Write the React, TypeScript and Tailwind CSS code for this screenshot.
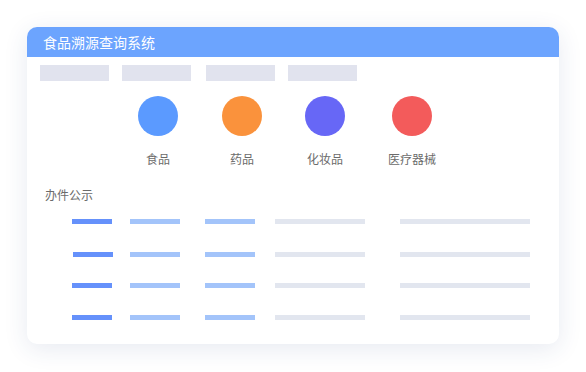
import React from "react";

const cats = [
  { name: "食品", color: "bg-[#5b9aff]", ml: "ml-[101px]" },
  { name: "药品", color: "bg-[#fa923c]", ml: "ml-[24px]" },
  { name: "化妆品", color: "bg-[#6767f6]", ml: "ml-[23px]" },
  { name: "医疗器械", color: "bg-[#f35b5b]", ml: "ml-[27px]" },
];

const rows = [
  { mt: "mt-[16px]", first: "ml-[45px]", second: "ml-[18px]" },
  { mt: "mt-[28px]", first: "ml-[46px]", second: "ml-[17px]" },
  { mt: "mt-[26px]", first: "ml-[45px]", second: "ml-[18px]" },
  { mt: "mt-[27px]", first: "ml-[45px]", second: "ml-[18px]" },
];

export default function App() {
  return (
    <div
      className="w-[586px] h-[372px] bg-white pt-[27px] pl-[27px]"
      style={{ fontFamily: '"Noto Sans CJK SC", "Noto Sans", sans-serif' }}
    >
      <div className="w-[532px] h-[317px] rounded-[10px] bg-white overflow-hidden shadow-[0_5px_24px_rgba(40,60,130,0.11)]">
        <div className="h-[30px] bg-[#6ca4fe] pl-[16px] text-[14px] leading-[30px] text-white">
          食品溯源查询系统
        </div>
        <div className="flex mt-[8px] pl-[13px]">
          <div className="w-[69px] h-[16px] bg-[#e1e3ee]" />
          <div className="w-[69px] h-[16px] bg-[#e1e3ee] ml-[13px]" />
          <div className="w-[69px] h-[16px] bg-[#e1e3ee] ml-[15px]" />
          <div className="w-[69px] h-[16px] bg-[#e1e3ee] ml-[13px]" />
        </div>
        <div className="flex mt-[15px]">
          {cats.map((c) => (
            <div key={c.name} className={`w-[60px] flex flex-col items-center ${c.ml}`}>
              <div className={`w-[40px] h-[40px] rounded-full ${c.color}`} />
              <div className="mt-[15px] text-[12px] leading-[16px] text-[#6b6b6b] whitespace-nowrap">
                {c.name}
              </div>
            </div>
          ))}
        </div>
        <div className="mt-[20px] pl-[18px] text-[12px] leading-[16px] text-[#6b6b6b]">办件公示</div>
        {rows.map((r, i) => (
          <div key={i} className={`flex ${r.mt}`}>
            <div className={`w-[40px] h-[5px] bg-[#6591fb] ${r.first}`} />
            <div className={`w-[50px] h-[5px] bg-[#a3c4fa] ${r.second}`} />
            <div className="w-[50px] h-[5px] bg-[#a3c4fa] ml-[25px]" />
            <div className="w-[90px] h-[5px] bg-[#e2e6ef] ml-[20px]" />
            <div className="w-[130px] h-[5px] bg-[#e2e6ef] ml-[35px]" />
          </div>
        ))}
      </div>
    </div>
  );
}
